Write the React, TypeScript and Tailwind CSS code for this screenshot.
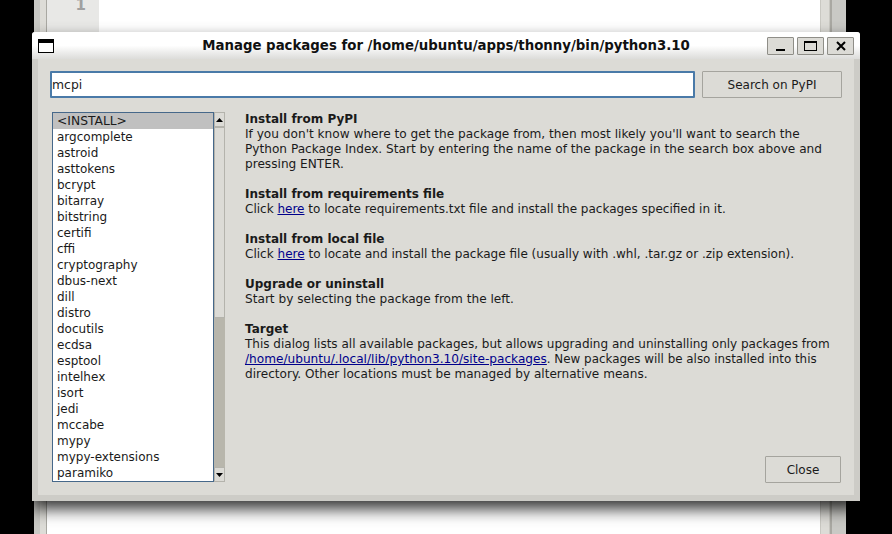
const PACKAGES = [
  "argcomplete", "astroid", "asttokens", "bcrypt", "bitarray", "bitstring", "certifi", "cffi",
  "cryptography", "dbus-next", "dill", "distro", "docutils", "ecdsa", "esptool", "intelhex",
  "isort", "jedi", "mccabe", "mypy", "mypy-extensions", "paramiko",
];

const Section = ({ title, children, className }: { title: string; children: React.ReactNode; className?: string }) => (
  <div className={className}>
    <div className="font-bold text-[12px]">{title}</div>
    <div>{children}</div>
  </div>
);

const Here = () => <span className="text-[#00008b] underline">here</span>;

const WinButton = ({ children }: { children: React.ReactNode }) => (
  <div className="w-[27px] h-[18px] bg-[#dcdbd6] border border-[#8f8e88] rounded-[1px] flex items-center justify-center">
    {children}
  </div>
);

const Arrow = ({ up }: { up?: boolean }) => (
  <div className="h-[15px] bg-[#dcdbd6] border border-[#b4b3ac] flex items-center justify-center">
    <svg width="7" height="4" viewBox="0 0 7 4">
      <path d={up ? "M3.5 0L7 4H0z" : "M3.5 4L7 0H0z"} fill="#000" />
    </svg>
  </div>
);

export default function App() {
  return (
    <div className="relative w-[892px] h-[534px] overflow-hidden bg-black font-['DejaVu_Sans',sans-serif] text-[12px] leading-[15px] text-[#1a1a1a]">
      {/* editor window behind */}
      <div className="ml-[34px] w-[812px] h-full flex bg-white">
        <div className="w-[6px] bg-[#c9c9c5]" />
        <div className="w-[7px] bg-[#dddcd7] border-r border-[#a9a8a2]" />
        <div className="w-[52px]">
          <div className="h-[40px] bg-[#e8e8e6] flex justify-end pr-[13px] text-[#a0a0a0] font-bold text-[15px] leading-[10px]">
            1
          </div>
        </div>
        <div className="flex-1 bg-white" />
        <div className="w-[10px] bg-[#dddcd7] border-x border-[#c9c8c2]" />
        <div className="w-[2px] bg-[#a9a8a2]" />
        <div className="w-[14px] bg-[#c9c9c5]" />
      </div>

      {/* dialog */}
      <div className="absolute left-[32px] top-[32px] w-[828px] h-[469px] flex flex-col bg-[#cdccc7] rounded-t-[3px] shadow-[0_8px_16px_rgba(0,0,0,0.8)]">
        <div className="h-[27px] shrink-0 flex items-center bg-gradient-to-b from-white from-50% to-[#dcdcda] rounded-t-[3px] pl-[6px] pr-[6px]">
          <div className="w-[16px] h-[14px] border border-black bg-white">
            <div className="h-[3px] bg-black" />
          </div>
          <div className="flex-1 text-center font-bold text-[13.32px] text-[#111] pl-[71px]">
            Manage packages for /home/ubuntu/apps/thonny/bin/python3.10
          </div>
          <div className="flex gap-[3px]">
            <WinButton>
              <div className="w-[9px] h-[2px] bg-black mt-[9px]" />
            </WinButton>
            <WinButton>
              <div className="w-[13px] h-[10px] border border-black border-t-2" />
            </WinButton>
            <WinButton>
              <svg width="10" height="10" viewBox="0 0 10 10">
                <path d="M1 1L9 9M9 1L1 9" stroke="#000" strokeWidth="2" />
              </svg>
            </WinButton>
          </div>
        </div>

        <div className="flex-1 mx-[6px] mb-[6px] bg-[#dcdbd6] flex flex-col px-[13px] pt-[12px] pb-[12px] min-h-0">
          <div className="flex gap-[7px] h-[27px] shrink-0 -mx-[1px]">
            <div className="flex-1 bg-white border-2 border-[#4a7aa8] rounded-[1px] flex items-center text-[12.4px] text-[#222]">
              mcpi
            </div>
            <div className="w-[140px] border border-[#a5a49e] rounded-[1px] pt-[1px] flex items-center justify-center">
              Search on PyPI
            </div>
          </div>

          <div className="flex flex-1 min-h-0 mt-[14px]">
            <div className="ml-[1px] w-[173px] h-[370px] flex shrink-0">
              <div className="w-[162px] border border-[#46688a] bg-white overflow-hidden">
                <div className="h-[16px] bg-[#c0c0c0] pl-[4px] leading-[16px] text-[12.3px]">&lt;INSTALL&gt;</div>
                {PACKAGES.map((name) => (
                  <div key={name} className="h-[16px] pl-[4px] leading-[16px]">
                    {name}
                  </div>
                ))}
              </div>
              <div className="w-[11px] flex flex-col bg-[#b8b6ac]">
                <Arrow up />
                <div className="h-[191px] bg-[#dcdbd6] border border-[#b4b3ac]" />
                <div className="flex-1" />
                <Arrow />
              </div>
            </div>

            <div className="flex-1 flex flex-col ml-[20px] min-w-0">
              <Section title="Install from PyPI">
                <span className="text-[12.13px]">
                  If you don't know where to get the package from, then most likely you'll want to search the
                  <br />
                  Python Package Index. Start by entering the name of the package in the search box above and
                  <br />
                  pressing ENTER.
                </span>
              </Section>
              <Section title="Install from requirements file" className="mt-[15px]">
                Click <Here /> to locate requirements.txt file and install the packages specified in it.
              </Section>
              <Section title="Install from local file" className="mt-[15px]">
                <span className="text-[12.04px]">
                  Click <Here /> to locate and install the package file (usually with .whl, .tar.gz or .zip extension).
                </span>
              </Section>
              <Section title="Upgrade or uninstall" className="mt-[15px]">
                <span className="text-[12.13px]">Start by selecting the package from the left.</span>
              </Section>
              <Section title="Target" className="mt-[15px]">
                This dialog lists all available packages, but allows upgrading and uninstalling only packages from
                <br />
                <span className="text-[#00008b] underline text-[12.13px]">/home/ubuntu/.local/lib/python3.10/site-packages</span>
                <span className="text-[11.9px]">. New packages will be also installed into this</span>
                <br />
                <span className="text-[12.09px]">directory. Other locations must be managed by alternative means.</span>
              </Section>
              <div className="mt-auto self-end w-[76px] h-[27px] border border-[#a5a49e] rounded-[1px] pt-[1px] flex items-center justify-center">
                Close
              </div>
            </div>
          </div>
        </div>
      </div>
    </div>
  );
}
